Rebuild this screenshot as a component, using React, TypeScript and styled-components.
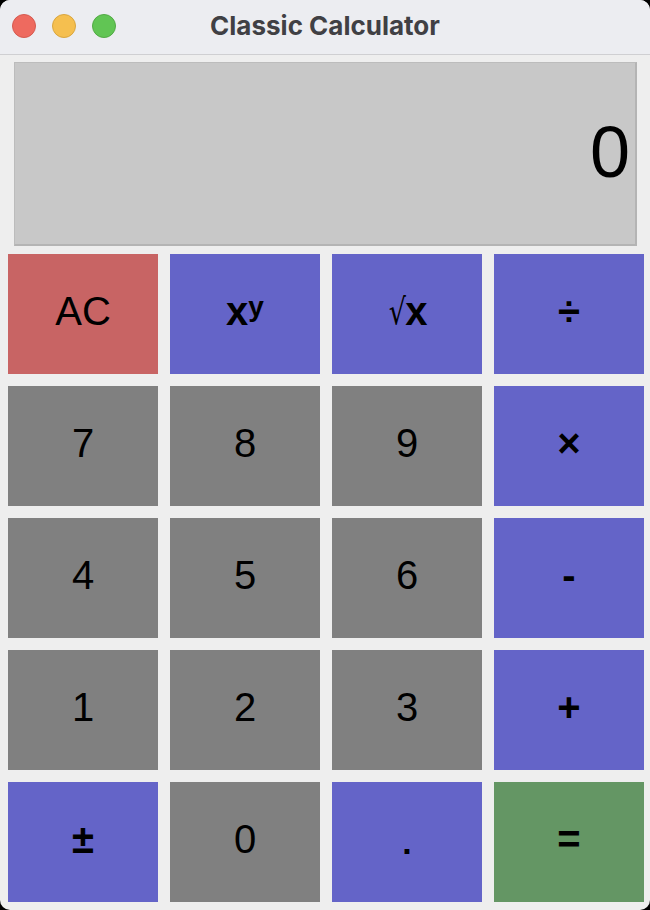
import styled, { createGlobalStyle } from "styled-components";

const GlobalStyle = createGlobalStyle`
  html, body {
    margin: 0;
    padding: 0;
    background: #000;
  }
  * {
    box-sizing: border-box;
  }
`;

const Window = styled.div`
  width: 650px;
  height: 910px;
  background-color: #eeeeee;
  border-radius: 10px;
  overflow: hidden;
  display: flex;
  flex-direction: column;
  font-family: "Liberation Sans", Arial, sans-serif;
`;

const TitleBar = styled.div`
  height: 55px;
  flex-shrink: 0;
  background-color: #ecedf1;
  border-bottom: 1px solid #cfcfd2;
  display: flex;
  align-items: center;
  justify-content: center;
  position: relative;
`;

const Lights = styled.div`
  position: absolute;
  left: 12px;
  top: 14px;
  display: flex;
  gap: 16px;
`;

const Light = styled.span<{ $color: string; $edge: string }>`
  width: 24px;
  height: 24px;
  border-radius: 50%;
  background-color: ${(p) => p.$color};
  border: 1px solid ${(p) => p.$edge};
`;

const Title = styled.div`
  font-family: Inter, "Liberation Sans", sans-serif;
  font-weight: 700;
  font-size: 26px;
  color: #404044;
  margin-top: -4px;
`;

const Body = styled.div`
  display: flex;
  flex-direction: column;
  padding: 7px 6px 8px 8px;
  gap: 8px;
`;

const Display = styled.div`
  height: 184px;
  margin: 0 7px 0 6px;
  background-color: #c8c8c8;
  border: 1px solid #bcbcbc;
  border-right: 2px solid #b4b4b4;
  border-bottom: 2px solid #b4b4b4;
  display: flex;
  align-items: center;
  justify-content: flex-end;
  padding: 0 5px 4px;
  font-size: 72px;
  color: #000;
`;

const Keys = styled.div`
  display: grid;
  grid-template-columns: repeat(4, 150px);
  grid-auto-rows: 120px;
  gap: 12px;
`;

const kinds = {
  clear: "#c86464",
  op: "#6464c8",
  num: "#808080",
  equal: "#649664",
};

const Key = styled.button<{ $kind: keyof typeof kinds }>`
  border: none;
  margin: 0;
  padding: 0 0 6px;
  background-color: ${(p) => kinds[p.$kind]};
  color: #000;
  font-family: "Liberation Sans", Arial, sans-serif;
  font-size: 40px;
  font-weight: ${(p) => (p.$kind === "op" || p.$kind === "equal" ? 700 : 400)};
  display: flex;
  align-items: center;
  justify-content: center;
  cursor: pointer;
`;

const Sup = styled.sup`
  font-size: 28px;
  font-weight: 700;
  line-height: 0;
  position: relative;
  top: -4px;
`;

const Root = styled.span`
  font-weight: 400;
  font-family: "DejaVu Sans", sans-serif;
  font-size: 36px;
  transform: scaleX(0.75);
  margin-right: -4px;
`;

const Dot = styled.span`
  font-size: 34px;
  padding-top: 6px;
`;

type K = { label: React.ReactNode; kind: keyof typeof kinds };

const keys: K[] = [
  { label: "AC", kind: "clear" },
  {
    label: (
      <>
        x<Sup>y</Sup>
      </>
    ),
    kind: "op",
  },
  {
    label: (
      <>
        <Root>√</Root>x
      </>
    ),
    kind: "op",
  },
  { label: "÷", kind: "op" },
  { label: "7", kind: "num" },
  { label: "8", kind: "num" },
  { label: "9", kind: "num" },
  { label: "×", kind: "op" },
  { label: "4", kind: "num" },
  { label: "5", kind: "num" },
  { label: "6", kind: "num" },
  { label: "-", kind: "op" },
  { label: "1", kind: "num" },
  { label: "2", kind: "num" },
  { label: "3", kind: "num" },
  { label: "+", kind: "op" },
  { label: "±", kind: "op" },
  { label: "0", kind: "num" },
  { label: <Dot>.</Dot>, kind: "op" },
  { label: "=", kind: "equal" },
];

const App: React.FC = () => {
  return (
    <>
      <GlobalStyle />
      <Window>
        <TitleBar>
          <Lights>
            <Light $color="#ee6a5f" $edge="#d55a50" />
            <Light $color="#f5bf4f" $edge="#d9a63f" />
            <Light $color="#61c554" $edge="#52aa45" />
          </Lights>
          <Title>Classic Calculator</Title>
        </TitleBar>
        <Body>
          <Display>0</Display>
          <Keys>
            {keys.map((k, i) => (
              <Key key={i} $kind={k.kind}>
                {k.label}
              </Key>
            ))}
          </Keys>
        </Body>
      </Window>
    </>
  );
};

export default App;
